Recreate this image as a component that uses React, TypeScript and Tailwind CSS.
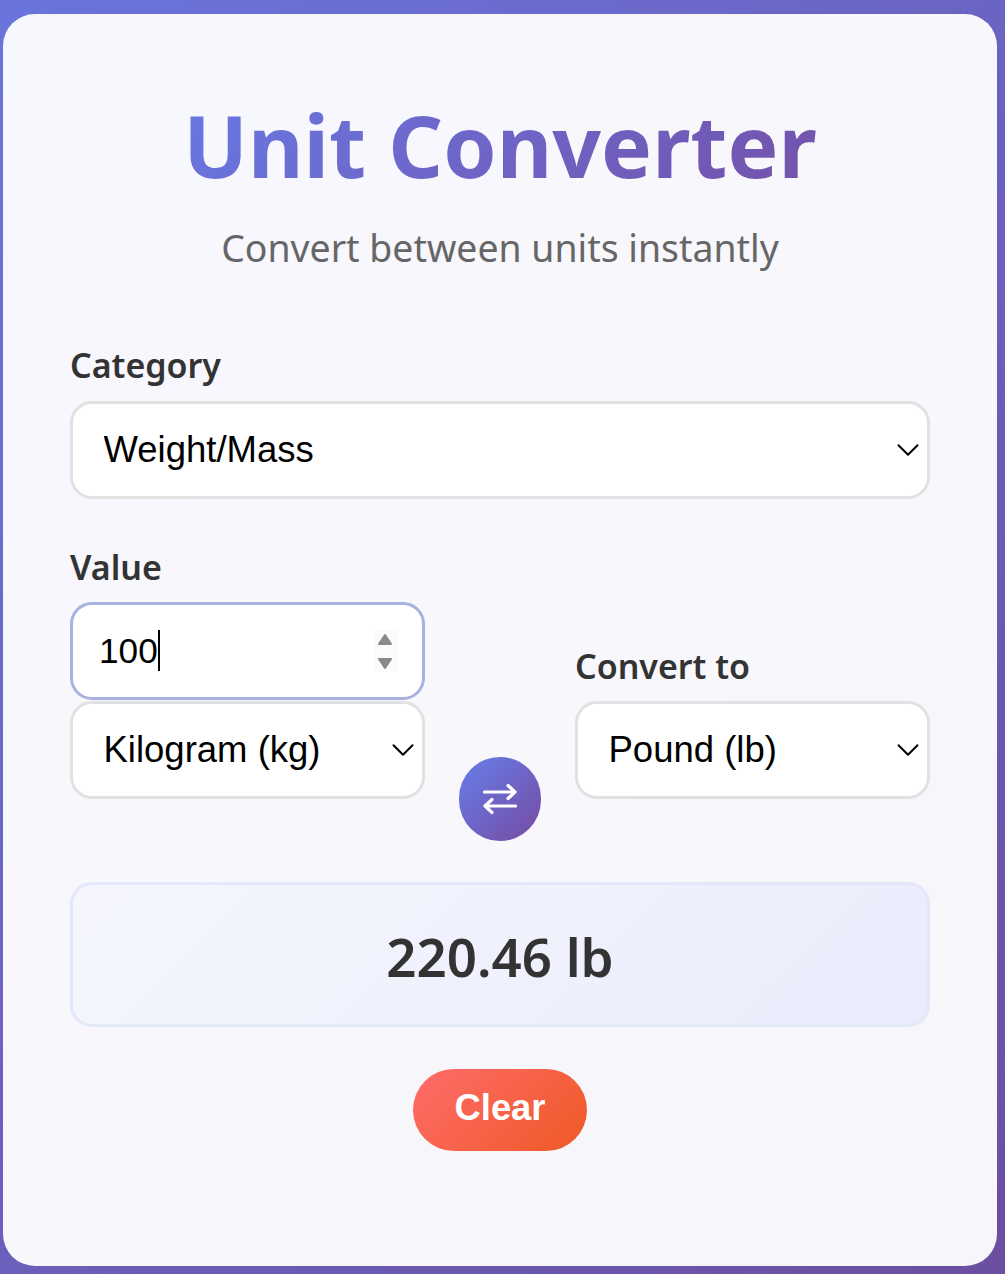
import { ChevronDown } from 'lucide-react';

const uiFont = "font-['Noto_Sans',sans-serif]";
const fieldFont = "font-['Liberation_Sans',sans-serif]";
const labelClass = 'block text-[34px] leading-[48px] font-semibold text-[#333333]';

function UnitSelect({ value, options }: { value: string; options: string[] }) {
  return (
    <div className="relative">
      <select
        defaultValue={value}
        className={`${fieldFont} block w-full h-[98px] appearance-none rounded-[22px] border-[3px] border-[#e1e1e1] bg-white pl-[30.5px] text-[36.5px] text-black outline-none`}
      >
        {options.map((option) => (
          <option key={option}>{option}</option>
        ))}
      </select>
      <ChevronDown className="absolute top-[30px] right-[3px] size-[38px] text-black pointer-events-none" strokeWidth={1.25} />
    </div>
  );
}

export default function App() {
  return (
    <div className="h-[1274px] bg-[linear-gradient(135deg,#6a74dc_0%,#6b4fa0_100%)] pt-[14px] pr-[8px] pl-[3px]">
      <div className={`${uiFont} h-[1252px] rounded-[32px] bg-white/95 px-[67px] pt-[79px]`}>
        <h1 className="bg-[linear-gradient(135deg,#667eea_0%,#764ba2_100%)] bg-clip-text text-center text-[85.5px] leading-[104px] font-bold text-transparent">
          Unit Converter
        </h1>
        <p className="mt-[24px] text-center text-[37.4px] leading-[54px] text-[#666666]">Convert between units instantly</p>

        <label className={`mt-[66px] ${labelClass}`}>Category</label>
        <div className="mt-[12px]">
          <UnitSelect value="Weight/Mass" options={['Length', 'Weight/Mass', 'Temperature', 'Volume']} />
        </div>

        <div className="mt-[44px] grid grid-cols-[355px_150px_355px] items-end">
          <div>
            <label className={labelClass}>Value</label>
            <div className="relative mt-[11px] mb-px">
              <input
                type="text"
                readOnly
                value="100"
                className={`${fieldFont} block h-[98px] w-full rounded-[22px] border-[3px] border-[#a8b2e0] bg-white pl-[26px] text-[35.2px] text-black outline-none`}
              />
              {/* caret and spinner drawn over the field */}
              <span className="absolute top-[28px] left-[88px] h-[41px] w-[2px] bg-black" />
              <div className="absolute top-[28px] left-[305px] h-[42px] w-[22px] bg-[#fbfbfb]" />
              <svg className="absolute top-[31px] left-[307px]" width="16" height="36" viewBox="0 0 16 36" fill="#8a8a8a" stroke="#8a8a8a" strokeWidth="2" strokeLinejoin="round">
                <path d="M8 2 L14 11 L2 11 Z" />
                <path d="M2 26 L14 26 L8 35 Z" />
              </svg>
            </div>
            <UnitSelect value="Kilogram (kg)" options={['Kilogram (kg)', 'Gram (g)', 'Pound (lb)']} />
          </div>

          <div className="flex justify-center">
            <button className="mb-[-42px] flex h-[84px] w-[82px] items-center justify-center rounded-full bg-[linear-gradient(135deg,#667eea_0%,#764ba2_100%)] pt-[2px] text-white">
              <svg width="34" height="32" viewBox="0 0 34 32" fill="none" stroke="currentColor" strokeWidth="3.2" strokeLinecap="round" strokeLinejoin="round">
                <path d="M1.5 8 H32 M25 1.5 L32 8 L25 14.5" />
                <path d="M32.5 22 H2 M9 15.5 L2 22 L9 28.5" />
              </svg>
            </button>
          </div>

          <div>
            <label className={labelClass}>Convert to</label>
            <div className="mt-[11px]">
              <UnitSelect value="Pound (lb)" options={['Kilogram (kg)', 'Gram (g)', 'Pound (lb)']} />
            </div>
          </div>
        </div>

        <div className="mt-[83px] flex h-[145px] items-center justify-center rounded-[22px] border-[3px] border-[#e3e7fa] bg-[linear-gradient(135deg,#f5f6fd_0%,#eaecfc_100%)] pt-[5px]">
          <span className="text-[52.8px] font-semibold text-[#333333]">220.46 lb</span>
        </div>

        <div className="mt-[42px] flex justify-center">
          <button className={`${fieldFont} h-[82px] w-[174px] rounded-full bg-[linear-gradient(135deg,#ff6b6b_0%,#ee5a24_100%)] pb-[3px] text-[36.4px] font-bold text-white`}>
            Clear
          </button>
        </div>
      </div>
    </div>
  );
}
